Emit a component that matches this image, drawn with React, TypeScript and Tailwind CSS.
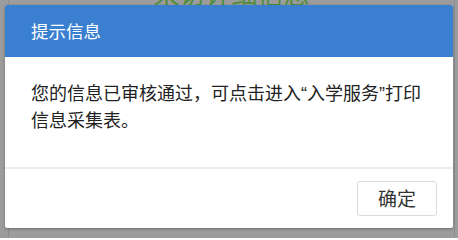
export default function App() {
  return (
    <div
      className="relative w-[458px] h-[238px] overflow-hidden bg-[#9c9c9c]"
      style={{ fontFamily: '"Noto Sans CJK SC", "Noto Sans", sans-serif' }}
    >
      {/* page content behind the overlay */}
      <div className="absolute left-[8px] right-[3px] top-[-20px] h-[280px] border-x border-[#8a8f96]">
        <p className="mt-[-2px] text-center text-[26px] leading-[30px] text-[#4f8f3a]">来访详细信息</p>
      </div>

      {/* dialog */}
      <div className="absolute left-[5px] top-[5px] w-[448px] h-[223px] flex flex-col bg-white rounded-[2px] shadow-[0_1px_3px_rgba(0,0,0,0.3)] overflow-hidden">
        <div className="h-[52px] shrink-0 flex items-center px-[26px] bg-[#3a7fd0]">
          <span className="text-[17.5px] text-white">提示信息</span>
        </div>
        <div className="flex-1 px-[26px] pt-[24px]">
          {/* Latin font first so the curly quotes come out narrow */}
          <p
            className="text-[18px] leading-[27px] text-[#222]"
            style={{ fontFamily: '"Liberation Sans", "Noto Sans CJK SC", sans-serif' }}
          >
            您的信息已审核通过，可点击进入“入学服务”打印信息采集表。
          </p>
        </div>
        <div className="h-[61px] shrink-0 flex items-center justify-end border-t-2 border-[#ececec] pr-[16px]">
          <button className="w-[80px] h-[35px] rounded-[3px] border border-[#dcdcdc] bg-white text-[19px] text-[#333]">
            确定
          </button>
        </div>
      </div>
    </div>
  );
}
